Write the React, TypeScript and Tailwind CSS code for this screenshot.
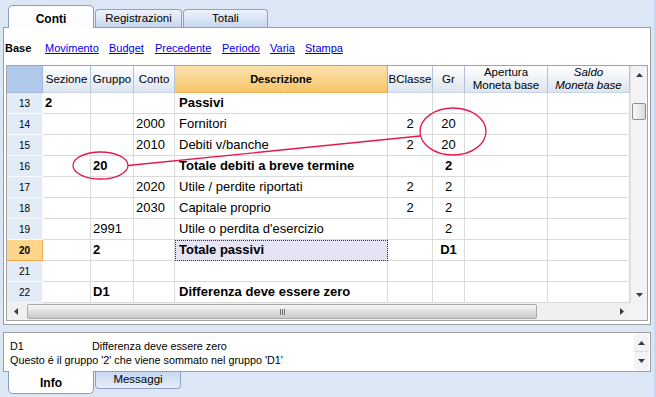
import React from "react";

type Row = {
  n: number;
  sez?: string;
  grp?: string;
  conto?: string;
  desc?: string;
  bc?: string;
  gr?: string;
  bold?: boolean;
  sel?: boolean;
};

const rows: Row[] = [
  { n: 13, sez: "2", desc: "Passivi", bold: true },
  { n: 14, conto: "2000", desc: "Fornitori", bc: "2", gr: "20" },
  { n: 15, conto: "2010", desc: "Debiti v/banche", bc: "2", gr: "20" },
  { n: 16, grp: "20", desc: "Totale debiti a breve termine", gr: "2", bold: true },
  { n: 17, conto: "2020", desc: "Utile / perdite riportati", bc: "2", gr: "2" },
  { n: 18, conto: "2030", desc: "Capitale proprio", bc: "2", gr: "2" },
  { n: 19, grp: "2991", desc: "Utile o perdita d'esercizio", gr: "2" },
  { n: 20, grp: "2", desc: "Totale passivi", gr: "D1", bold: true, sel: true },
  { n: 21 },
  { n: 22, grp: "D1", desc: "Differenza deve essere zero", bold: true },
];

function Tri({ dir }: { dir: "up" | "down" | "left" | "right" }) {
  const pts =
    dir === "up"
      ? "0,4 7,4 3.5,0"
      : dir === "down"
      ? "0,0 7,0 3.5,4"
      : dir === "left"
      ? "4,0 4,7 0,3.5"
      : "0,0 0,7 4,3.5";
  const w = dir === "up" || dir === "down" ? 7 : 4;
  const h = dir === "up" || dir === "down" ? 4 : 7;
  return (
    <svg width={w} height={h} viewBox={`0 0 ${w} ${h}`}>
      <polygon points={pts} fill="#3c3c3c" />
    </svg>
  );
}

function GridRow({ r }: { r: Row }) {
  const b = r.bold ? "font-bold" : "";
  const cell = "h-[21px] border-r border-b border-[#dadada] flex items-center";
  const num =
    r.n === 20
      ? "bg-[#fdd68c] border-b border-[#efab4e] font-bold"
      : "bg-[#e3ebf6] border-b border-[#f7f9fc]";
  return (
    <div className="flex h-[21px] text-[13px] text-black">
      <div className={`w-[36px] h-[21px] flex items-center justify-center text-[10px] border-r border-[#cfdbeb] ${num}`}>
        {r.n}
      </div>
      <div className={`w-[48px] ${cell} pl-[2px] ${r.bold ? "font-bold" : ""}`}>{r.sez}</div>
      <div className={`w-[43px] ${cell} pl-[2px] ${b}`}>{r.grp}</div>
      <div className={`w-[41px] ${cell} pl-[2px]`}>{r.conto}</div>
      <div
        className={`w-[213px] ${cell} pl-[4px] whitespace-nowrap overflow-hidden ${b} ${
          r.sel ? "bg-[#e4e4f5] outline-1 outline-dotted outline-[#333] -outline-offset-1" : ""
        }`}
      >
        {r.desc}
      </div>
      <div className={`w-[45px] ${cell} justify-center`}>{r.bc}</div>
      <div className={`w-[32px] ${cell} justify-center ${b}`}>{r.gr}</div>
      <div className={`w-[83px] ${cell}`}></div>
      <div className={`w-[82px] ${cell}`}></div>
    </div>
  );
}

export default function App() {
  const hdr =
    "h-[27px] border-r border-b border-r-[#b3c4da] border-b-[#c9d5e4] bg-gradient-to-b from-[#ffffff] to-[#dde5f0] flex items-center justify-center text-[11.5px] text-black leading-[13px] text-center";
  return (
    <div className="w-[656px] h-[397px] bg-[#dce7f5] border-r-[2px] border-[#c8d8ee] overflow-hidden relative font-['Liberation_Sans',Arial,sans-serif]">
      {/* top tabs */}
      <div className="h-[27px] flex items-end pl-[8px]">
        <div className="relative z-10 w-[86px] h-[23px] mb-[-1px] bg-gradient-to-b from-[#ffffff] to-[#fbfcfe] border border-b-0 border-[#8d9db6] rounded-t-[5px] flex items-start justify-center pt-[4px] text-[12px] font-bold text-black">
          Conti
        </div>
        <div className="w-[87px] h-[18px] ml-[1px] bg-gradient-to-b from-[#eff3fb] to-[#c7d7ef] border border-b-0 border-[#8fa2c1] rounded-t-[4px] flex items-center justify-center text-[11.5px] text-black">
          Registrazioni
        </div>
        <div className="w-[85px] h-[18px] ml-[1px] bg-gradient-to-b from-[#eff3fb] to-[#c7d7ef] border border-b-0 border-[#8fa2c1] rounded-t-[4px] flex items-center justify-center text-[11.5px] text-black">
          Totali
        </div>
      </div>

      {/* main panel */}
      <div className="ml-[3px] w-[648px] h-[298px] bg-white border border-[#9d9d9d] flex flex-col">
        <div className="h-[37px] flex items-center pt-[3px] pl-[1px] text-[11px] whitespace-nowrap">
          <span className="w-[40px] font-bold text-black">Base</span>
          <span className="w-[64px] text-[#0000ee] underline">Movimento</span>
          <span className="w-[46px] text-[#0000ee] underline">Budget</span>
          <span className="w-[67px] text-[#0000ee] underline">Precedente</span>
          <span className="w-[48px] text-[#0000ee] underline">Periodo</span>
          <span className="w-[35px] text-[#0000ee] underline">Varia</span>
          <span className="text-[#0000ee] underline">Stampa</span>
        </div>

        {/* grid */}
        <div className="ml-[2px] w-[642px] h-[256px] border border-[#a3a3a3] flex flex-col">
          <div className="flex h-[237px]">
            <div className="w-[623px] flex flex-col">
              <div className="flex h-[27px]">
                <div className="w-[36px] h-[27px] bg-[#b0c9eb] border-r border-b border-[#a4bcdc]"></div>
                <div className={`w-[48px] ${hdr}`}>Sezione</div>
                <div className={`w-[43px] ${hdr}`}>Gruppo</div>
                <div className={`w-[41px] ${hdr}`}>Conto</div>
                <div className="w-[213px] h-[27px] border-r border-b border-r-[#f0a33c] border-b-[#f0b458] bg-gradient-to-b from-[#fbe2ae] to-[#f6c468] flex items-center justify-center text-[11px] font-bold text-black">
                  Descrizione
                </div>
                <div className={`w-[45px] ${hdr}`}>BClasse</div>
                <div className={`w-[32px] ${hdr}`}>Gr</div>
                <div className={`w-[83px] ${hdr} flex-col`}>
                  <span>Apertura</span>
                  <span>Moneta base</span>
                </div>
                <div className={`w-[82px] ${hdr} flex-col italic text-[#505050]`}>
                  <span>Saldo</span>
                  <span>Moneta base</span>
                </div>
              </div>
              {rows.map((r) => (
                <GridRow key={r.n} r={r} />
              ))}
            </div>
            {/* vertical scrollbar */}
            <div className="w-[17px] h-[237px] bg-[#f4f2f4] border-l border-[#e2e0e2] flex flex-col">
              <div className="h-[17px] flex items-center justify-center pt-[1px]">
                <Tri dir="up" />
              </div>
              <div className="flex-1 flex flex-col">
                <div className="mt-[20px] mx-[1px] h-[17px] rounded-[2px] border border-[#8e8e8e] bg-gradient-to-r from-[#fbfbfb] to-[#d9d9d9]"></div>
              </div>
              <div className="h-[17px] flex items-center justify-center">
                <Tri dir="down" />
              </div>
            </div>
          </div>
          {/* horizontal scrollbar */}
          <div className="flex h-[17px]">
            <div className="w-[623px] h-[17px] bg-[#f1f0f1] flex items-center">
              <div className="w-[17px] h-[17px] flex items-center justify-center">
                <Tri dir="left" />
              </div>
              <div className="ml-[3px] w-[510px] h-[15px] rounded-[2px] border border-[#a8a8a8] bg-gradient-to-b from-[#f7f7f7] to-[#cacaca] flex items-center justify-center">
                <div className="flex gap-[1px]">
                  <div className="w-[1px] h-[6px] bg-[#707070]"></div>
                  <div className="w-[1px] h-[6px] bg-[#707070]"></div>
                  <div className="w-[1px] h-[6px] bg-[#707070]"></div>
                </div>
              </div>
              <div className="flex-1"></div>
              <div className="w-[17px] h-[17px] flex items-center justify-center">
                <Tri dir="right" />
              </div>
            </div>
            <div className="w-[17px] h-[17px] bg-[#f4f2f4]"></div>
          </div>
        </div>
      </div>

      {/* info panel */}
      <div className="mt-[7px] ml-[3px] w-[648px] h-[40px] bg-white border border-[#9d9d9d] flex">
        <div className="flex-1 pt-[6px] pl-[6px] text-[10.8px] leading-[14px] text-black">
          <div className="flex">
            <span className="w-[82px]">D1</span>
            <span>Differenza deve essere zero</span>
          </div>
          <div>Questo é il gruppo '2' che viene sommato nel gruppo 'D1'</div>
        </div>
        <div className="w-[15px] h-[36px] mt-[1px] mr-[1px] bg-[#f4f2f4] flex flex-col">
          <div className="h-[18px] flex items-center justify-center border-b border-[#dcdcdc]">
            <Tri dir="up" />
          </div>
          <div className="h-[18px] flex items-center justify-center">
            <Tri dir="down" />
          </div>
        </div>
      </div>

      {/* bottom tabs */}
      <div className="flex items-start pl-[8px]">
        <div className="relative z-10 w-[86px] h-[23px] mt-[-1px] bg-white border border-t-0 border-[#8d9db6] rounded-b-[5px] flex items-center justify-center pt-[1px] text-[12px] font-bold text-black">
          Info
        </div>
        <div className="w-[86px] h-[17px] ml-[1px] bg-gradient-to-b from-[#c6d7f0] to-[#e6eef9] border border-t-0 border-[#8fa2c1] rounded-b-[4px] flex items-center justify-center text-[11.5px] text-black">
          Messaggi
        </div>
      </div>

      {/* red annotation overlay */}
      <svg className="absolute left-0 top-0 pointer-events-none" width="656" height="397" viewBox="0 0 656 397">
        <ellipse cx="100.5" cy="165.5" rx="27.5" ry="13.5" fill="none" stroke="#e5194c" strokeWidth="1.3" />
        <ellipse cx="453" cy="131.5" rx="33" ry="23.5" fill="none" stroke="#e5194c" strokeWidth="1.3" />
        <line x1="128" y1="165.5" x2="420" y2="136" stroke="#e5194c" strokeWidth="1.3" />
      </svg>
    </div>
  );
}
